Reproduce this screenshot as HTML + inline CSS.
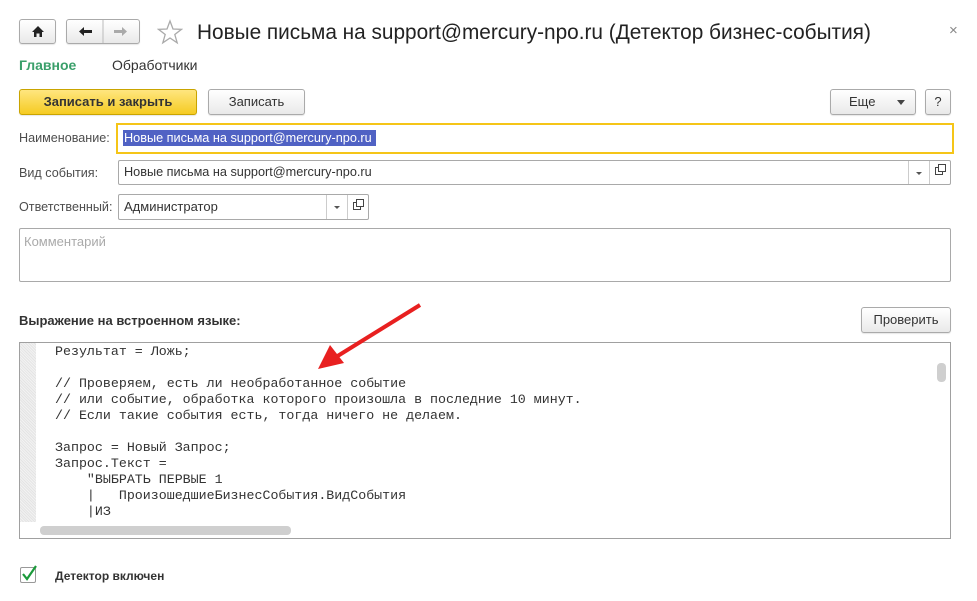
<!DOCTYPE html>
<html><head><meta charset="utf-8"><style>
*{box-sizing:border-box;margin:0;padding:0}
body{width:977px;height:601px;background:#fff;position:relative;font-family:Arial,"Liberation Sans",sans-serif;font-size:13px;color:#333;overflow:hidden}
.a{position:absolute}
.btn{position:absolute;border:1px solid #aaa;border-radius:3px;background:linear-gradient(#fff,#e9e9e9);text-align:center;color:#333;box-shadow:0 1px 1px rgba(0,0,0,.1)}
.fld{position:absolute;border:1px solid #a9a9a9;border-radius:2px;background:#fff;white-space:nowrap}
.lbl{position:absolute;color:#4d4d4d;font-size:12.6px}
.code{font-family:"Liberation Mono",monospace;font-size:13.3px;line-height:16px;color:#333;white-space:pre}
</style></head><body>
<div class="btn" style="left:19px;top:19px;width:37px;height:25px"><svg width="37" height="23" viewBox="0 0 37 23"><path d="M12 12 L18 6 L24 12 H22 V17 H19.5 V13.5 H16.5 V17 H14 V12Z" fill="#222"/></svg></div>
<div class="btn" style="left:66px;top:19px;width:74px;height:25px"><svg width="72" height="23" viewBox="0 0 72 23"><path d="M12 11.5 L17 7 V10 H25 V13 H17 V16Z" fill="#222"/><line x1="36" y1="0" x2="36" y2="23" stroke="#bbb"/><path d="M60 11.5 L55 7 V10 H47 V13 H55 V16Z" fill="#aaa"/></svg></div>
<svg class="a" style="left:157px;top:19px" width="26" height="26" viewBox="0 0 26 26"><path d="M13 2 L16 10 L24.5 10.3 L17.8 15.5 L20.2 23.8 L13 19 L5.8 23.8 L8.2 15.5 L1.5 10.3 L10 10Z" fill="none" stroke="#aaa" stroke-width="1.3"/></svg>
<div class="a" style="left:197px;top:21px;font-size:20.8px;color:#222;white-space:nowrap">Новые письма на support@mercury-npo.ru (Детектор бизнес-события)</div>
<div class="a" style="left:949px;top:22px;font-size:15px;color:#888">×</div>
<div class="a" style="left:19px;top:57px;font-size:14px;font-weight:bold;color:#3a9f6a">Главное</div>
<div class="a" style="left:112px;top:57px;font-size:14px;color:#333">Обработчики</div>
<div class="btn" style="left:19px;top:89px;width:178px;height:26px;background:linear-gradient(#ffe680,#f5cb22);border-color:#c9a400;font-weight:bold;line-height:24px">Записать и закрыть</div>
<div class="btn" style="left:208px;top:89px;width:97px;height:26px;line-height:24px">Записать</div>
<div class="btn" style="left:830px;top:89px;width:86px;height:26px;line-height:24px;text-align:left;padding-left:18px">Еще<span class="a" style="left:66px;top:10px;border:4px solid transparent;border-top:5px solid #444;width:0;height:0"></span></div>
<div class="btn" style="left:925px;top:89px;width:26px;height:26px;line-height:24px">?</div>
<div class="lbl" style="left:19px;top:131px">Наименование:</div>
<div class="a" style="left:116px;top:123px;width:838px;height:31px;border:2px solid #f5c518"></div>
<div class="a" style="left:123px;top:130px;width:253px;height:16px;background:#5062c4;color:#fff;line-height:16px;padding-left:1px;white-space:nowrap;font-size:12.7px">Новые письма на support@mercury-npo.ru</div>
<div class="lbl" style="left:19px;top:166px">Вид события:</div>
<div class="fld" style="left:118px;top:160px;width:833px;height:25px;padding:4px 0 0 5px;color:#333;font-size:12.7px">Новые письма на support@mercury-npo.ru
<div class="a" style="left:789px;top:0;width:1px;height:23px;background:#ccc"></div><div class="a" style="left:797px;top:11px;border:3px solid transparent;border-top:3px solid #555"></div>
<div class="a" style="left:810px;top:0;width:1px;height:23px;background:#ccc"></div><div class="a" style="left:816px;top:6px;width:8px;height:8px;border:1px solid #444"></div><div class="a" style="left:819px;top:3px;width:8px;height:8px;border:1px solid #444;background:#fff"></div></div>
<div class="lbl" style="left:19px;top:200px">Ответственный:</div>
<div class="fld" style="left:118px;top:194px;width:251px;height:26px;padding:4px 0 0 5px;color:#333">Администратор
<div class="a" style="left:207px;top:0;width:1px;height:24px;background:#ccc"></div><div class="a" style="left:215px;top:11px;border:3px solid transparent;border-top:3px solid #555"></div>
<div class="a" style="left:228px;top:0;width:1px;height:24px;background:#ccc"></div><div class="a" style="left:234px;top:7px;width:8px;height:8px;border:1px solid #444"></div><div class="a" style="left:237px;top:4px;width:8px;height:8px;border:1px solid #444;background:#fff"></div></div>
<div class="fld" style="left:19px;top:228px;width:932px;height:54px;padding:5px 0 0 4px;color:#aaa">Комментарий</div>
<div class="a" style="left:19px;top:313px;font-weight:bold;color:#333">Выражение на встроенном языке:</div>
<div class="btn" style="left:861px;top:307px;width:90px;height:26px;line-height:24px">Проверить</div>
<div class="a" style="left:19px;top:342px;width:932px;height:197px;border:1px solid #a0a0a0;overflow:hidden">
<div class="a" style="left:0;top:0;width:16px;height:179px;background:repeating-linear-gradient(45deg,#e4e4e4 0 1px,#f2f2f2 1px 2px)"></div>
<div class="a code" style="left:35px;top:1px">Результат = Ложь;

// Проверяем, есть ли необработанное событие
// или событие, обработка которого произошла в последние 10 минут.
// Если такие события есть, тогда ничего не делаем.

Запрос = Новый Запрос;
Запрос.Текст =
    "ВЫБРАТЬ ПЕРВЫЕ 1
    |   ПроизошедшиеБизнесСобытия.ВидСобытия
    |ИЗ</div>
<div class="a" style="left:20px;top:183px;width:251px;height:9px;border-radius:4px;background:#cfcfcf"></div>
<div class="a" style="left:917px;top:20px;width:9px;height:19px;border-radius:4px;background:#cfcfcf"></div>
</div>
<div class="a" style="left:20px;top:567px;width:16px;height:16px;border:1px solid #999;border-radius:2px;background:#fff"></div>
<svg class="a" style="left:20px;top:564px" width="18" height="18" viewBox="0 0 18 18"><path d="M3 10 L7 15 L16 2" fill="none" stroke="#1a9a3a" stroke-width="2.2"/></svg>
<div class="a" style="left:55px;top:569px;font-weight:bold;font-size:12px;color:#333">Детектор включен</div>
<svg class="a" style="left:300px;top:295px" width="135" height="90" viewBox="0 0 135 90"><line x1="120" y1="10" x2="36" y2="62" stroke="#e82020" stroke-width="4"/><path d="M18 74 L30 50 L44 68Z" fill="#e82020"/></svg>
</body></html>
